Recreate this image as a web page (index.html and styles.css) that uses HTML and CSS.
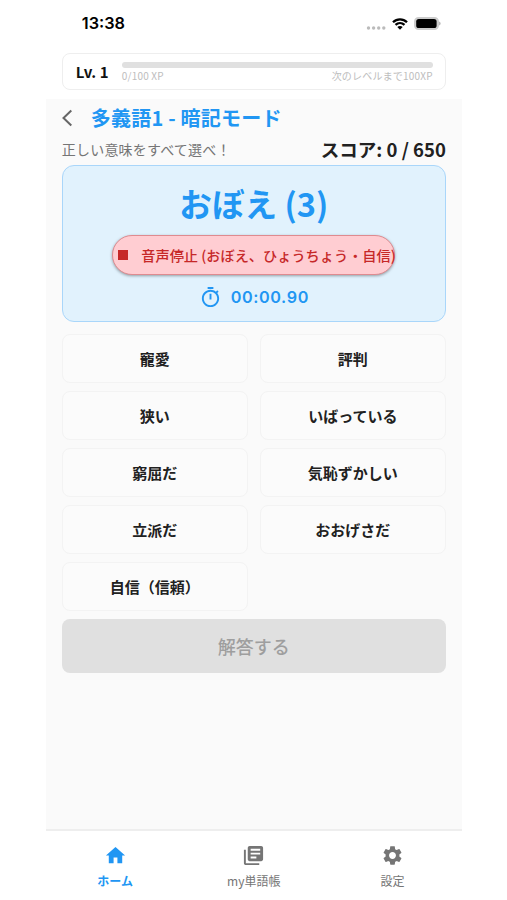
FILE: index.html
```html
<!DOCTYPE html>
<html lang="ja">
<head>
    <meta charset="UTF-8">
    <meta name="viewport" content="width=device-width, initial-scale=1.0">
    <title>多義語1 - 暗記モード</title>
    <link rel="stylesheet" href="styles.css">
</head>
<body>
    <div class="phone">
        <div class="status-bar">
            <span class="clock">13:38</span>
            <div class="status-icons">
                <svg class="signal" viewBox="0 0 20 4"><circle cx="2.5" cy="2" r="1.7"/><circle cx="7.6" cy="2" r="1.7"/><circle cx="12.7" cy="2" r="1.7"/><circle cx="17.8" cy="2" r="1.7"/></svg>
                <svg class="wifi" viewBox="0 0 16 12">
                    <path d="M1 4.2C5 .3 11 .3 15 4.2M3.5 6.9c2.6-2.4 6.400-2.400 9 0" fill="none" stroke="#000" stroke-width="2.300"/>
                    <path d="M5.300 9c1.500-1.400 3.900-1.400 5.400 0L8 11.800z"/>
                </svg>
                <svg class="battery" viewBox="0 0 27 13">
                    <rect x=".8" y=".8" width="23.400" height="11.400" rx="3.800" fill="#ccc" stroke="#ccc" stroke-width="1.600"/>
                    <rect x="2.200" y="2" width="20.400" height="9" rx="2.600"/>
                    <path d="M25.200 4.500c1.800.6 1.800 3.400 0 4z" fill="#aaa"/>
                </svg>
            </div>
        </div>

        <div class="level-card">
            <span class="level">Lv. 1</span>
            <div class="xp">
                <div class="xp-bar"></div>
                <div class="xp-labels">
                    <span>0/100 XP</span>
                    <span>次のレベルまで100XP</span>
                </div>
            </div>
        </div>

        <main class="quiz">
            <div class="title-row">
                <svg class="back" viewBox="0 0 12 18"><path d="M10.300 1.500L2.500 9l7.800 7.500" fill="none" stroke="#666" stroke-width="2"/></svg>
                <h1>多義語1 - 暗記モード</h1>
            </div>
            <div class="info-row">
                <span class="hint">正しい意味をすべて選べ！</span>
                <span class="score">スコア: 0 / 650</span>
            </div>

            <div class="question">
                <h2>おぼえ (3)</h2>
                <button class="voice-stop"><span class="stop-icon"></span><span class="voice-text">音声停止 (おぼえ、ひょうちょう・自信)</span></button>
                <div class="timer">
                    <svg viewBox="0 0 24 24"><path d="M15 1H9v2h6V1zm-4 13h2V8h-2v6zm8.030-6.610l1.420-1.420c-.43-.51-.9-.99-1.410-1.410l-1.420 1.420C16.070 4.740 14.120 4 12 4c-4.970 0-9 4.030-9 9s4.020 9 9 9 9-4.030 9-9c0-2.120-.74-4.070-1.970-5.610zM12 20c-3.870 0-7-3.130-7-7s3.130-7 7-7 7 3.130 7 7-3.130 7-7 7z"/></svg>
                    <span>00:00.90</span>
                </div>
            </div>

            <div class="choices">
                <button class="choice">寵愛</button>
                <button class="choice">評判</button>
                <button class="choice">狭い</button>
                <button class="choice">いばっている</button>
                <button class="choice">窮屈だ</button>
                <button class="choice">気恥ずかしい</button>
                <button class="choice">立派だ</button>
                <button class="choice">おおげさだ</button>
                <button class="choice">自信（信頼）</button>
            </div>

            <button class="submit" disabled>解答する</button>
        </main>

        <nav class="tabs">
            <a class="tab active">
                <svg viewBox="0 0 24 24"><path d="M10 20v-6h4v6h5v-8h3L12 3 2 12h3v8z"/></svg>
                <span>ホーム</span>
            </a>
            <a class="tab">
                <svg viewBox="0 0 24 24"><path d="M4 6H2v14c0 1.100.9 2 2 2h14v-2H4V6z"/><path fill-rule="evenodd" d="M20 2H8c-1.100 0-2 .9-2 2v12c0 1.100.9 2 2 2h12c1.100 0 2-.9 2-2V4c0-1.100-.9-2-2-2zM9 5h10v2H9zM9 9h10v2H9zM9 13h6v2H9z"/></svg>
                <span>my単語帳</span>
            </a>
            <a class="tab">
                <svg viewBox="0 0 24 24"><path d="M19.140 12.940c.04-.3.060-.61.060-.94 0-.32-.02-.64-.07-.94l2.030-1.580c.18-.14.23-.41.120-.61l-1.920-3.320c-.12-.22-.37-.29-.59-.22l-2.390.96c-.5-.38-1.030-.7-1.620-.94l-.36-2.540c-.04-.24-.24-.41-.48-.41h-3.840c-.24 0-.43.170-.47.410l-.36 2.540c-.59.240-1.130.570-1.620.940l-2.390-.96c-.22-.08-.47 0-.59.220L2.740 8.870c-.12.210-.08.470.120.610l2.030 1.580c-.05.300-.09.630-.09.940s.02.640.070.940l-2.030 1.580c-.18.140-.23.410-.12.610l1.920 3.320c.12.220.37.290.59.220l2.390-.96c.5.380 1.030.7 1.620.94l.36 2.540c.05.240.24.410.48.410h3.840c.24 0 .44-.17.470-.41l.36-2.540c.59-.24 1.130-.56 1.620-.94l2.390.96c.22.080.47 0 .59-.22l1.920-3.320c.12-.22.070-.47-.12-.61l-2.010-1.580zM12 15.600c-1.980 0-3.600-1.620-3.600-3.600s1.620-3.600 3.600-3.600 3.600 1.620 3.600 3.600-1.620 3.600-3.600 3.600z"/></svg>
                <span>設定</span>
            </a>
        </nav>
    </div>
</body>
</html>
```

FILE: styles.css
```css
* {
    box-sizing: border-box;
}

body {
    margin: 0;
    background: #fff;
    font-family: "Noto Sans CJK JP", sans-serif;
    color: #212121;
}

button {
    font-family: inherit;
    padding: 0;
}

svg {
    display: block;
}

.phone {
    width: 416px;
    height: 900px;
    margin-left: 45.8px;
    display: flex;
    flex-direction: column;
    overflow: hidden;
}

/* status bar */
.status-bar {
    height: 53px;
    padding: 13px 21px 0 36px;
    display: flex;
    justify-content: space-between;
    align-items: flex-start;
}

.clock {
    font: 600 16.3px/21px Inter, sans-serif;
    color: #000;
}

.status-icons {
    display: flex;
    align-items: center;
    gap: 6px;
    padding-top: 4px;
}

.signal {
    width: 20px;
    height: 4px;
    margin-top: 8px;
    fill: #bbb;
}

.wifi {
    width: 16px;
    height: 12px;
}

.battery {
    width: 27px;
    height: 13px;
}

/* level */
.level-card {
    height: 37px;
    margin: 0 16px;
    padding: 0 12px 0 13px;
    border: 1px solid #eee;
    border-radius: 8px;
    display: flex;
    align-items: center;
}

.level {
    width: 46px;
    font-size: 15px;
    font-weight: bold;
    line-height: 20px;
    color: #111;
    white-space: nowrap;
}

.xp {
    flex: 1;
}

.xp-bar {
    height: 6px;
    border-radius: 3px;
    background: #e0e0e0;
}

.xp-labels {
    display: flex;
    justify-content: space-between;
    margin-top: 2px;
    font-size: 10px;
    line-height: 12px;
    letter-spacing: 0.2px;
    color: #bdbdbd;
}

/* quiz */
.quiz {
    flex: 1;
    margin-top: 9px;
    padding: 0 16px;
    background: #fafafa;
}

.title-row {
    height: 37px;
    display: flex;
    align-items: center;
}

.back {
    width: 12px;
    height: 18px;
    margin: 0 18px 0 -1px;
}

.title-row h1 {
    margin: 0;
    padding-top: 1px;
    font-size: 20px;
    line-height: 30px;
    letter-spacing: 0.22px;
    color: #2196f3;
}

.info-row {
    height: 29px;
    padding-bottom: 4px;
    display: flex;
    justify-content: space-between;
    align-items: center;
}

.hint {
    font-size: 14px;
    line-height: 20px;
    letter-spacing: 0.2px;
    color: #757575;
}

.score {
    font-size: 18.5px;
    font-weight: bold;
    line-height: 26px;
}

.question {
    height: 157px;
    border: 1px solid #a9d6fa;
    border-radius: 12px;
    background: #e1f2fd;
    display: flex;
    flex-direction: column;
    align-items: center;
}

.question h2 {
    margin: 14px 0 0;
    font-size: 32.6px;
    line-height: 46px;
    color: #2196f3;
}

.voice-stop {
    width: 283px;
    height: 40px;
    margin-top: 9px;
    padding: 0 0 0 5px;
    display: flex;
    align-items: center;
    gap: 13px;
    flex-shrink: 0;
    border: 1px solid #df8b90;
    border-radius: 20px;
    background: #ffcdd2;
    box-shadow: 0 1px 3px rgba(0, 0, 0, 0.35);
    color: #c62828;
}

.stop-icon {
    width: 10px;
    height: 10px;
    flex-shrink: 0;
    background: #c62828;
}

.voice-text {
    font-size: 14.2px;
    font-weight: 500;
    white-space: nowrap;
}

.timer {
    margin-top: 10px;
    display: flex;
    align-items: center;
    gap: 9px;
    font: 600 16.2px/23px Inter, sans-serif;
    letter-spacing: 0.6px;
    color: #2196f3;
}

.timer span {
    padding-top: 1px;
}

.timer svg {
    width: 23px;
    height: 23px;
    fill: #2196f3;
}

/* answers */
.choices {
    margin-top: 12px;
    display: grid;
    grid-template-columns: 1fr 1fr;
    gap: 8px 12px;
}

.choice {
    height: 49px;
    border: 1px solid #f3f3f3;
    border-radius: 8px;
    background: #fbfbfb;
    font-size: 15px;
    font-weight: bold;
    color: #212121;
}

.submit {
    width: 100%;
    height: 54px;
    margin-top: 8px;
    border: none;
    border-radius: 8px;
    background: #e0e0e0;
    font-size: 18px;
    font-weight: 500;
    color: #9e9e9e;
}

/* bottom navigation */
.tabs {
    height: 71px;
    padding-top: 13px;
    border-top: 2px solid #eee;
    display: flex;
}

.tab {
    flex: 1;
    display: flex;
    flex-direction: column;
    align-items: center;
    gap: 5px;
    font-size: 12px;
    line-height: 18px;
    color: #757575;
}

.tab svg {
    width: 23px;
    height: 23px;
    fill: currentColor;
}

.active {
    font-weight: bold;
    color: #2196f3;
}
```
